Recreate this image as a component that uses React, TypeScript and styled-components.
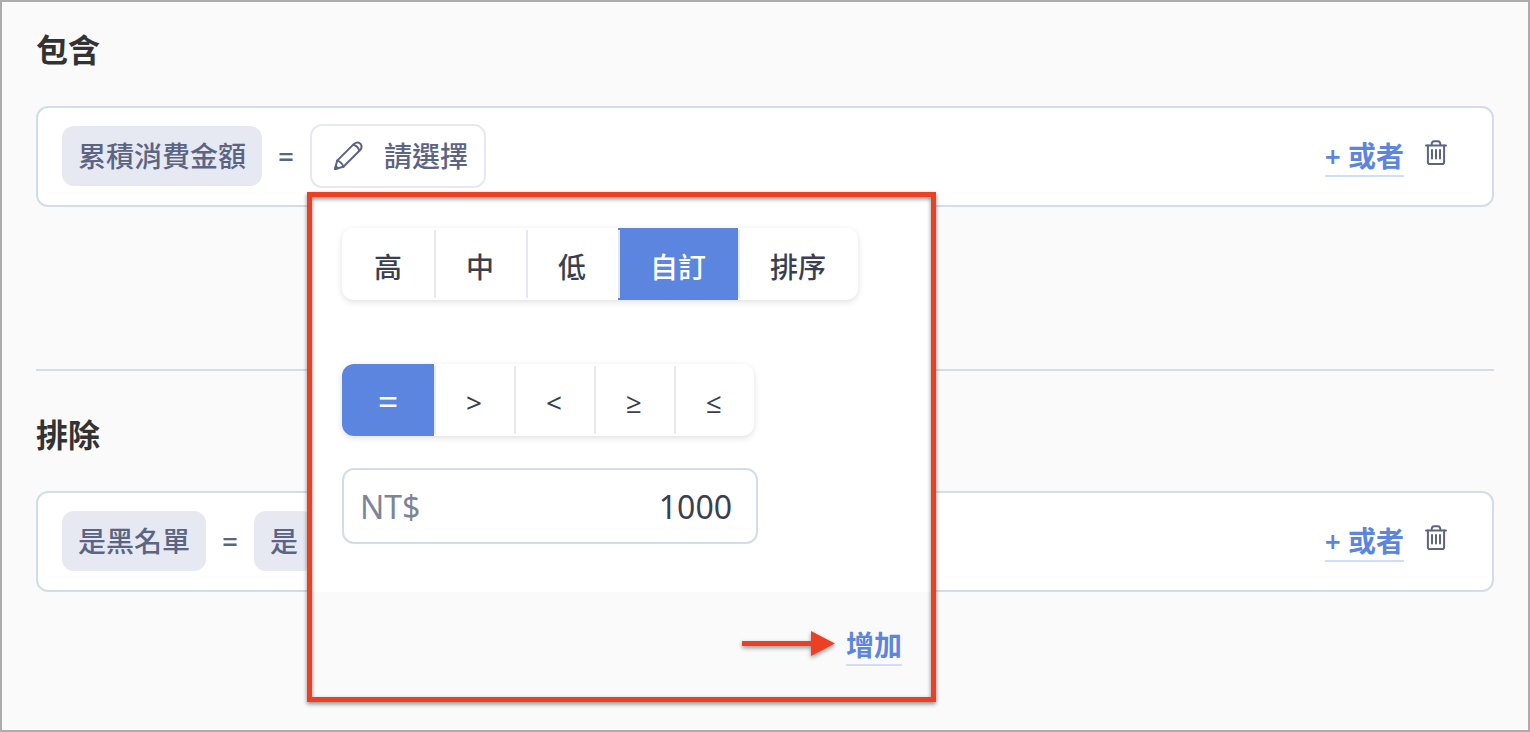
import React from "react";
import styled, { createGlobalStyle } from "styled-components";

const GlobalStyle = createGlobalStyle`
  *, *::before, *::after { box-sizing: border-box; }
  body {
    margin: 0;
    background: #fafafa;
    font-family: "Noto Sans", "Noto Sans CJK TC", sans-serif;
  }
`;

const Frame = styled.main`
  position: relative;
  display: flex;
  flex-direction: column;
  height: 732px;
  padding: 0 34px;
  border: 2px solid #acacac;
  background: #fafafa;
  overflow: hidden;
`;

const Section = styled.section<{ $divided?: boolean }>`
  display: flex;
  flex-direction: column;
  height: ${(p) => (p.$divided ? "369px" : "auto")};
  border-bottom: ${(p) => (p.$divided ? "2px solid #d3dde6" : "0")};
`;

const Title = styled.h2<{ $top: number }>`
  margin: ${(p) => p.$top}px 0 32px;
  height: 48px;
  line-height: 48px;
  font-size: 32px;
  font-weight: 700;
  color: #333;
`;

const Row = styled.div`
  display: flex;
  align-items: center;
  height: 101px;
  padding: 0 45px 1px 24px;
  border: 2px solid #d3dde6;
  border-radius: 12px;
  background: #fff;
`;

const Chip = styled.span`
  height: 60px;
  padding: 0 16px;
  border-radius: 12px;
  background: #e6e9f1;
  color: #5c6484;
  font-size: 28px;
  font-weight: 500;
  line-height: 60px;
`;

const Equals = styled.span`
  width: 48px;
  text-align: center;
  color: #5c6484;
  font-size: 28px;
  font-weight: 500;
  line-height: 60px;
`;

const SelectButton = styled.button`
  display: flex;
  align-items: center;
  gap: 21px;
  height: 64px;
  padding: 0 16px 0 21px;
  border: 2px solid #e6e9f1;
  border-radius: 12px;
  background: #fff;
  color: #5c6484;
  font: 500 28px/60px "Noto Sans", "Noto Sans CJK TC", sans-serif;
`;

const RowActions = styled.div`
  display: flex;
  align-items: flex-start;
  gap: 21px;
  height: 38px;
  margin-left: auto;
`;

const TextLink = styled.a`
  height: 40px;
  border-bottom: 2px solid #cfddfb;
  color: #5c85df;
  font-size: 28px;
  font-weight: 600;
  line-height: 38px;
  white-space: nowrap;
`;

const TrashSlot = styled.span`
  display: flex;
  padding-top: 3px;
`;

const Popup = styled.div`
  position: absolute;
  left: 308px;
  top: 192px;
  display: flex;
  flex-direction: column;
  width: 624px;
  height: 506px;
  background: #fff;
`;

const PopupBody = styled.div`
  flex: 1;
  display: flex;
  flex-direction: column;
  align-items: flex-start;
  padding: 34px 32px 0;
`;

const PopupFooter = styled.div`
  display: flex;
  justify-content: flex-end;
  height: 108px;
  padding: 34px 32px 0;
  background: #fafafa;
`;

const Segmented = styled.div<{ $gap: number }>`
  display: flex;
  height: 72px;
  margin-bottom: ${(p) => p.$gap}px;
  border-radius: 12px;
  background: #fff;
  box-shadow: 0 2px 6px rgba(40, 45, 60, 0.15);
`;

const Segment = styled.button<{ $active?: boolean }>`
  position: relative;
  height: 72px;
  padding: 6px 32px 0;
  border: 0;
  background: ${(p) => (p.$active ? "#5c85df" : "transparent")};
  color: ${(p) => (p.$active ? "#fff" : "#3a3f4f")};
  font: 500 28px/66px "Noto Sans", "Open Sans", "Noto Sans CJK TC", sans-serif;

  &:first-child { border-radius: 12px 0 0 12px; }

  &:not(:first-child)::before {
    content: "";
    position: absolute;
    left: 0;
    top: 2px;
    bottom: 2px;
    width: 2px;
    background: #e6e9f1;
  }
`;

const OperatorSegment = styled(Segment)`
  padding-top: 4px;
  font-weight: 400;
  line-height: 68px;

  &:first-child {
    width: 92px;
    padding: 4px 0 0;
    font-size: 36px;
  }
`;

const AmountField = styled.div`
  display: flex;
  align-items: center;
  justify-content: space-between;
  width: 416px;
  height: 76px;
  padding: 2px 24px 0 16px;
  border: 2px solid #d3dde6;
  border-radius: 12px;
  color: #3a3f4f;
  font-size: 32px;
  line-height: 70px;
`;

const Currency = styled.span`
  color: #7c8498;
`;

const Highlight = styled.div`
  position: absolute;
  left: 305px;
  top: 190px;
  width: 629px;
  height: 510px;
  border: 5px solid #ec4025;
  filter: drop-shadow(0 2px 2px rgba(0, 0, 0, 0.45));
  pointer-events: none;
`;

const Arrow = styled.svg`
  position: absolute;
  left: 738px;
  top: 624px;
  filter: drop-shadow(0 2px 2px rgba(0, 0, 0, 0.4));
`;

const PencilIcon = () => (
  <svg width="30" height="30" viewBox="0 0 30 30" fill="none" stroke="#5c6484" strokeWidth="2" strokeLinejoin="round" strokeLinecap="round">
    <path d="M2 28 L4.2 19.6 L21 2.9 Q24.2 0.2 27.4 2.7 Q29.8 5.8 27.2 9 L10.4 25.8 Z" />
    <path d="M4.2 19.6 Q8.9 21 10.4 25.8" />
    <path d="M20.4 3.8 Q25 5 26.2 9.6" />
    <path d="M2 28 L2.8 25.2 L4.8 27.2 Z" fill="#5c6484" />
  </svg>
);

const TrashIcon = () => (
  <svg width="22" height="26" viewBox="0 0 22 26" fill="none" stroke="#5c6484" strokeWidth="2" strokeLinecap="round" strokeLinejoin="round">
    <path d="M1 5.4 H21" />
    <path d="M6.5 5 Q6.7 1.2 9 1.2 H13 Q15.3 1.2 15.5 5" />
    <path d="M2.9 5.4 V22.2 Q2.9 24 4.7 24 H17.3 Q19.1 24 19.1 22.2 V5.4" />
    <path d="M7 10 V18.6 M11 10 V18.6 M15 10 V18.6" />
  </svg>
);

const OrActions = () => (
  <RowActions>
    <TextLink>+ 或者</TextLink>
    <TrashSlot>
      <TrashIcon />
    </TrashSlot>
  </RowActions>
);

const LEVELS = ["高", "中", "低", "自訂", "排序"];
const OPERATORS = ["=", ">", "<", "≥", "≤"];

export default function App() {
  return (
    <>
      <GlobalStyle />
      <Frame>
        <Section $divided>
          <Title $top={24}>包含</Title>
          <Row>
            <Chip>累積消費金額</Chip>
            <Equals>=</Equals>
            <SelectButton>
              <PencilIcon />
              請選擇
            </SelectButton>
            <OrActions />
          </Row>
        </Section>
        <Section>
          <Title $top={40}>排除</Title>
          <Row>
            <Chip>是黑名單</Chip>
            <Equals>=</Equals>
            <Chip>是</Chip>
            <OrActions />
          </Row>
        </Section>

        <Popup>
          <PopupBody>
            <Segmented $gap={64}>
              {LEVELS.map((label) => (
                <Segment key={label} $active={label === "自訂"}>{label}</Segment>
              ))}
            </Segmented>
            <Segmented $gap={32}>
              {OPERATORS.map((label) => (
                <OperatorSegment key={label} $active={label === "="}>{label}</OperatorSegment>
              ))}
            </Segmented>
            <AmountField>
              <Currency>NT$</Currency>
              <span>1000</span>
            </AmountField>
          </PopupBody>
          <PopupFooter>
            <TextLink>增加</TextLink>
          </PopupFooter>
        </Popup>
        <Highlight />
        <Arrow width="100" height="36" viewBox="0 0 100 36" fill="#ec4025">
          <path d="M2 15 H71 V5 L95 17.5 L71 30 V20 H2 Z" />
        </Arrow>
      </Frame>
    </>
  );
}
